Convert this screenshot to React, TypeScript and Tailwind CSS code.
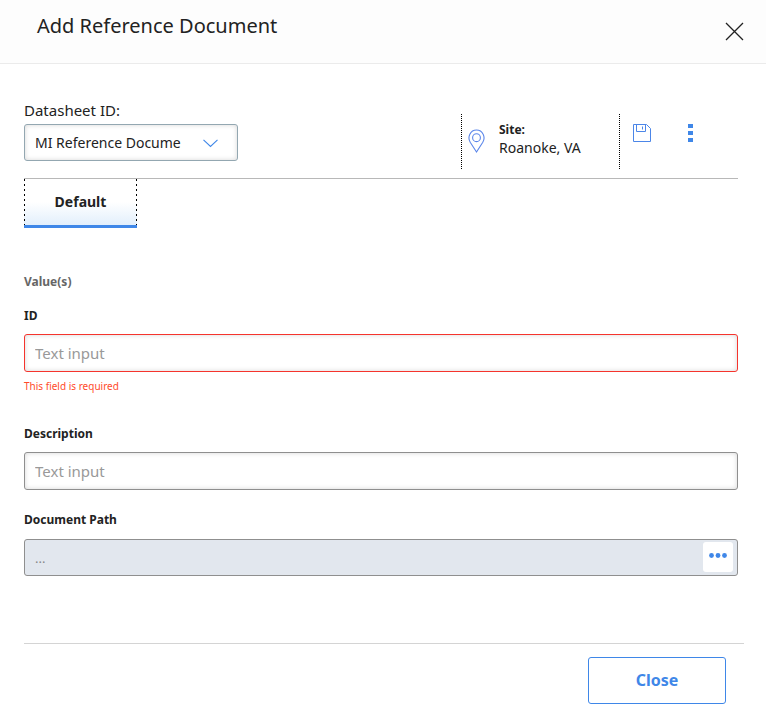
import { useState } from "react";

const inputStyle =
  "block w-full h-[38px] rounded-[3px] border bg-white px-2.5 text-[15px] text-[#222] placeholder:text-[#999] shadow-[inset_0_0_5px_rgba(0,0,0,0.16)] outline-none";

const Header = () => (
  <header className="flex h-16 items-start justify-between border-b border-[#ebebeb] bg-[#fdfdfd] pl-[37px] pr-[22px]">
    <h1 className="pt-3 text-xl leading-7">Add Reference Document</h1>
    <button type="button" aria-label="Close dialog" className="mt-[22px] cursor-pointer">
      <svg width="19" height="19" viewBox="0 0 19 19" stroke="#222" strokeWidth="1.3">
        <path d="M1 1L18 18M18 1L1 18" />
      </svg>
    </button>
  </header>
);

const Toolbar = () => (
  <div className="flex items-start justify-between border-b border-[#b8b8b8] pb-[9px]">
    {/* DATASHEET */}
    <div className="pb-2">
      <label htmlFor="datasheet" className="block pb-0.5 text-[15px] leading-6">
        Datasheet ID:
      </label>
      <div className="relative w-[214px]">
        <select
          id="datasheet"
          className="h-[37px] w-full appearance-none rounded-[3px] border border-[#93a7b1] bg-white pl-2.5 pr-14 text-sm shadow-[inset_0_0_5px_rgba(0,0,0,0.16)] outline-none"
        >
          <option>MI Reference Document</option>
        </select>
        <svg
          className="pointer-events-none absolute right-5 top-[15px]"
          width="15"
          height="9"
          viewBox="0 0 15 9"
          fill="none"
          stroke="#3f87e8"
          strokeWidth="1.1"
        >
          <path d="M0.5 0.8L7.5 7.5L14.5 0.8" />
        </svg>
      </div>
    </div>
    {/* SITE AND ACTIONS */}
    <div className="mt-4 flex h-[55px] items-start">
      <div className="flex h-full w-[158px] border-l border-dotted border-black pl-1.5">
        <svg
          className="mt-[15px]"
          width="17"
          height="24"
          viewBox="0 0 17 24"
          fill="none"
          stroke="#5b86ea"
          strokeWidth="1.1"
        >
          <path d="M8.5 23L2.2 13.2C-0.9 8 2.3 1 8.5 1S17.9 8 14.8 13.2Z" />
          <circle cx="8.5" cy="8.7" r="3.9" />
        </svg>
        <div className="ml-3.5 mt-2">
          <p className="text-xs font-bold leading-4">Site:</p>
          <p className="text-sm leading-5">Roanoke, VA</p>
        </div>
      </div>
      <div className="flex h-full w-[119px] items-start border-l border-dotted border-black pl-[13px]">
        <button type="button" aria-label="Save" className="mt-2.5 cursor-pointer">
          <svg width="18" height="18" viewBox="0 0 18 18" fill="none" stroke="#4c86e8">
            <path d="M0.5 0.5H13.5L17.5 4.5V17.5H0.5Z" />
            <path d="M3.5 0.5V7.5H12.5V0.5M9.5 2.5V5.5" />
          </svg>
        </button>
        <button type="button" aria-label="More actions" className="ml-[37px] mt-2.5 cursor-pointer">
          <svg width="5" height="18" viewBox="0 0 5 18" fill="#3f87e8">
            <path d="M0 0H5V4H0ZM0 7H5V11H0ZM0 14H5V18H0Z" />
          </svg>
        </button>
      </div>
    </div>
  </div>
);

const App = () => {
  const [id, setId] = useState("");
  const [description, setDescription] = useState("");

  return (
    <div className="bg-white font-['Noto_Sans',sans-serif] text-[#222]">
      <Header />
      <main className="pl-6 pr-7 pt-[34px]">
        <Toolbar />
        {/* TABS */}
        <button
          type="button"
          className="block h-[49px] w-[113px] cursor-pointer border-b-[3px] border-[#3f87e8] bg-[repeating-linear-gradient(#000_0_2px,transparent_2px_5px),repeating-linear-gradient(#000_0_2px,transparent_2px_5px),linear-gradient(#fff_50%,#e2effc)] bg-[position:left,right,center] bg-[size:1px_100%,1px_100%,100%_100%] bg-no-repeat text-sm font-bold"
        >
          Default
        </button>
        {/* FORM */}
        <form className="pt-11">
          <h2 className="text-xs font-bold leading-5 text-[#666]">Value(s)</h2>
          <label htmlFor="doc-id" className="mt-3.5 block text-xs font-bold leading-5">
            ID
          </label>
          <input
            id="doc-id"
            type="text"
            placeholder="Text input"
            value={id}
            onChange={(e) => setId(e.target.value)}
            className={`${inputStyle} mt-2 border-[#f5342d]`}
          />
          <p className="mt-1.5 text-[10px] leading-4 text-[#ff4b2b]">This field is required</p>
          <label htmlFor="description" className="mt-[30px] block text-xs font-bold leading-5">
            Description
          </label>
          <input
            id="description"
            type="text"
            placeholder="Text input"
            value={description}
            onChange={(e) => setDescription(e.target.value)}
            className={`${inputStyle} mt-2 border-[#8f8f8f]`}
          />
          <label htmlFor="path" className="mt-5 block text-xs font-bold leading-5">
            Document Path
          </label>
          <div className="mt-[9px] flex h-[37px] items-center rounded-[3px] border border-[#8f8f8f] bg-[#e2e7ee] pb-px pr-1">
            <input
              id="path"
              type="text"
              placeholder="..."
              readOnly
              className="h-full min-w-0 flex-1 px-2.5 pt-0.5 text-[13px] placeholder:text-[#888] outline-none"
            />
            <button
              type="button"
              aria-label="Browse"
              className="flex h-[30px] w-[30px] cursor-pointer justify-center rounded-[3px] bg-white pt-[11px]"
            >
              <svg width="18" height="5" viewBox="0 0 18 5" fill="#3f87e8">
                <circle cx="2.5" cy="2.5" r="2.4" />
                <circle cx="9" cy="2.5" r="2.4" />
                <circle cx="15.5" cy="2.5" r="2.4" />
              </svg>
            </button>
          </div>
        </form>
      </main>
      <footer className="ml-6 mr-[22px] mt-[67px] flex justify-end border-t border-[#d4d4d4] pb-[7px] pr-[18px] pt-[13px]">
        <button
          type="button"
          className="h-[47px] w-[138px] cursor-pointer rounded-[3px] border border-[#3f87e8] pb-0.5 text-base font-bold text-[#3f87e8]"
        >
          Close
        </button>
      </footer>
    </div>
  );
};

export default App;
